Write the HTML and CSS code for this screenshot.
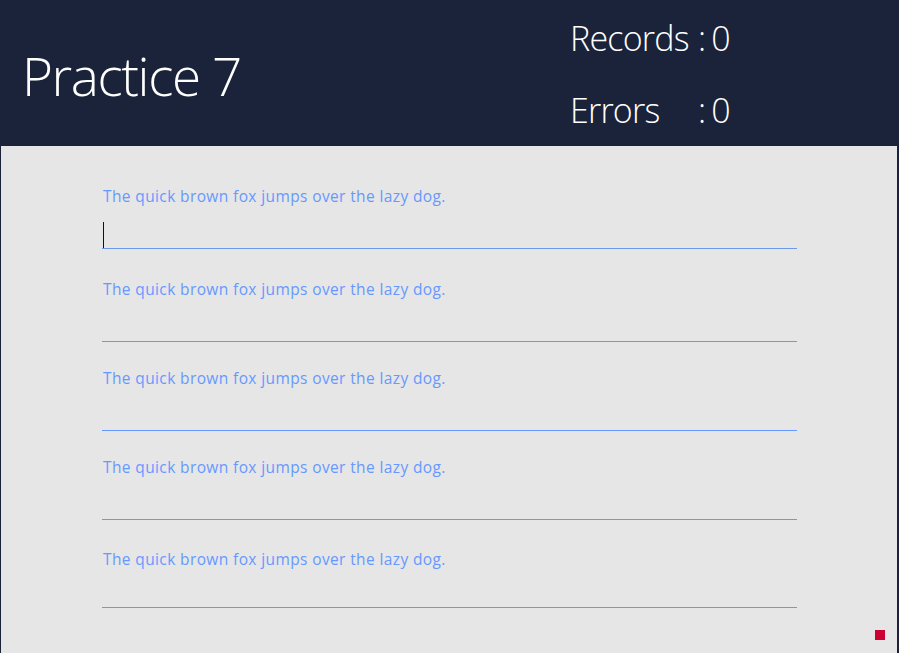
FILE: index.html
```html
<!DOCTYPE html>
<html>
<head>
<meta charset="utf-8">
<link rel="stylesheet" href="styles.css">
</head>
<body>
<div class="window">
  <header class="header">
    <h1 class="title">Practice 7</h1>
    <div class="stats">
      <span class="stat-label">Records</span><span class="stat-value">: 0</span>
      <span class="stat-label">Errors</span><span class="stat-value">: 0</span>
    </div>
  </header>
  <main class="content">
    <div class="row">
      <div class="prompt">The quick brown fox jumps over the lazy dog.</div>
      <div class="field focused"><span class="caret"></span></div>
    </div>
    <div class="row">
      <div class="prompt">The quick brown fox jumps over the lazy dog.</div>
      <div class="field"></div>
    </div>
    <div class="row">
      <div class="prompt">The quick brown fox jumps over the lazy dog.</div>
      <div class="field"></div>
    </div>
    <div class="row">
      <div class="prompt">The quick brown fox jumps over the lazy dog.</div>
      <div class="field"></div>
    </div>
    <div class="row">
      <div class="prompt">The quick brown fox jumps over the lazy dog.</div>
      <div class="field"></div>
    </div>
    <div class="indicator"></div>
  </main>
</div>
</body>
</html>
```
FILE: styles.css
```css
html, body {
  margin: 0;
  padding: 0;
  width: 899px;
  height: 653px;
  overflow: hidden;
  background: #1a233a;
}

.window {
  width: 899px;
  height: 653px;
  display: flex;
  flex-direction: column;
  font-family: "Open Sans", "Noto Sans", sans-serif;
}

.header {
  height: 146px;
  flex: none;
  background: #1a233a;
  display: flex;
  justify-content: space-between;
  color: #ffffff;
  box-sizing: border-box;
  padding-left: 22px;
}

.title {
  margin: 0;
  font-weight: 300;
  font-size: 53px;
  line-height: 1;
  padding-top: 49px;
  letter-spacing: -1.4px;
}

.stats {
  display: grid;
  grid-template-columns: 128px auto;
  grid-auto-rows: 72px;
  align-content: start;
  padding-top: 15px;
  width: 329px;
  font-weight: 300;
  font-size: 34px;
  line-height: 46px;
  letter-spacing: -0.8px;
}

.stat-value {
  white-space: pre;
  word-spacing: -2px;
}

.content {
  flex: 1;
  position: relative;
  background: #e6e6e6;
  margin-left: 1px;
  margin-right: 2px;
  padding: 38px 0 0 101px;
  display: flex;
  flex-direction: column;
}

.row {
  width: 695px;
  display: flex;
  flex-direction: column;
  margin-bottom: 24px;
}

.row:first-child {
  margin-bottom: 28px;
}

.row:nth-child(4) {
  margin-bottom: 27px;
}

.row:nth-child(5) .field {
  height: 36px;
}

.prompt {
  color: #6699ff;
  font-family: "Open Sans", sans-serif;
  font-size: 15.5px;
  line-height: 24px;
  padding-left: 1px;
  letter-spacing: 0.38px;
}

.field {
  height: 40px;
  border-bottom: 1px solid #6699ff;
  display: flex;
  align-items: flex-end;
}

.field.focused {
  border-bottom-color: #6e9be8;
}

.caret {
  display: block;
  width: 1px;
  height: 26px;
  margin-left: 1px;
  background: #111111;
}

.indicator {
  position: absolute;
  right: 12px;
  bottom: 13px;
  width: 10px;
  height: 10px;
  background: #cc0033;
}
```
